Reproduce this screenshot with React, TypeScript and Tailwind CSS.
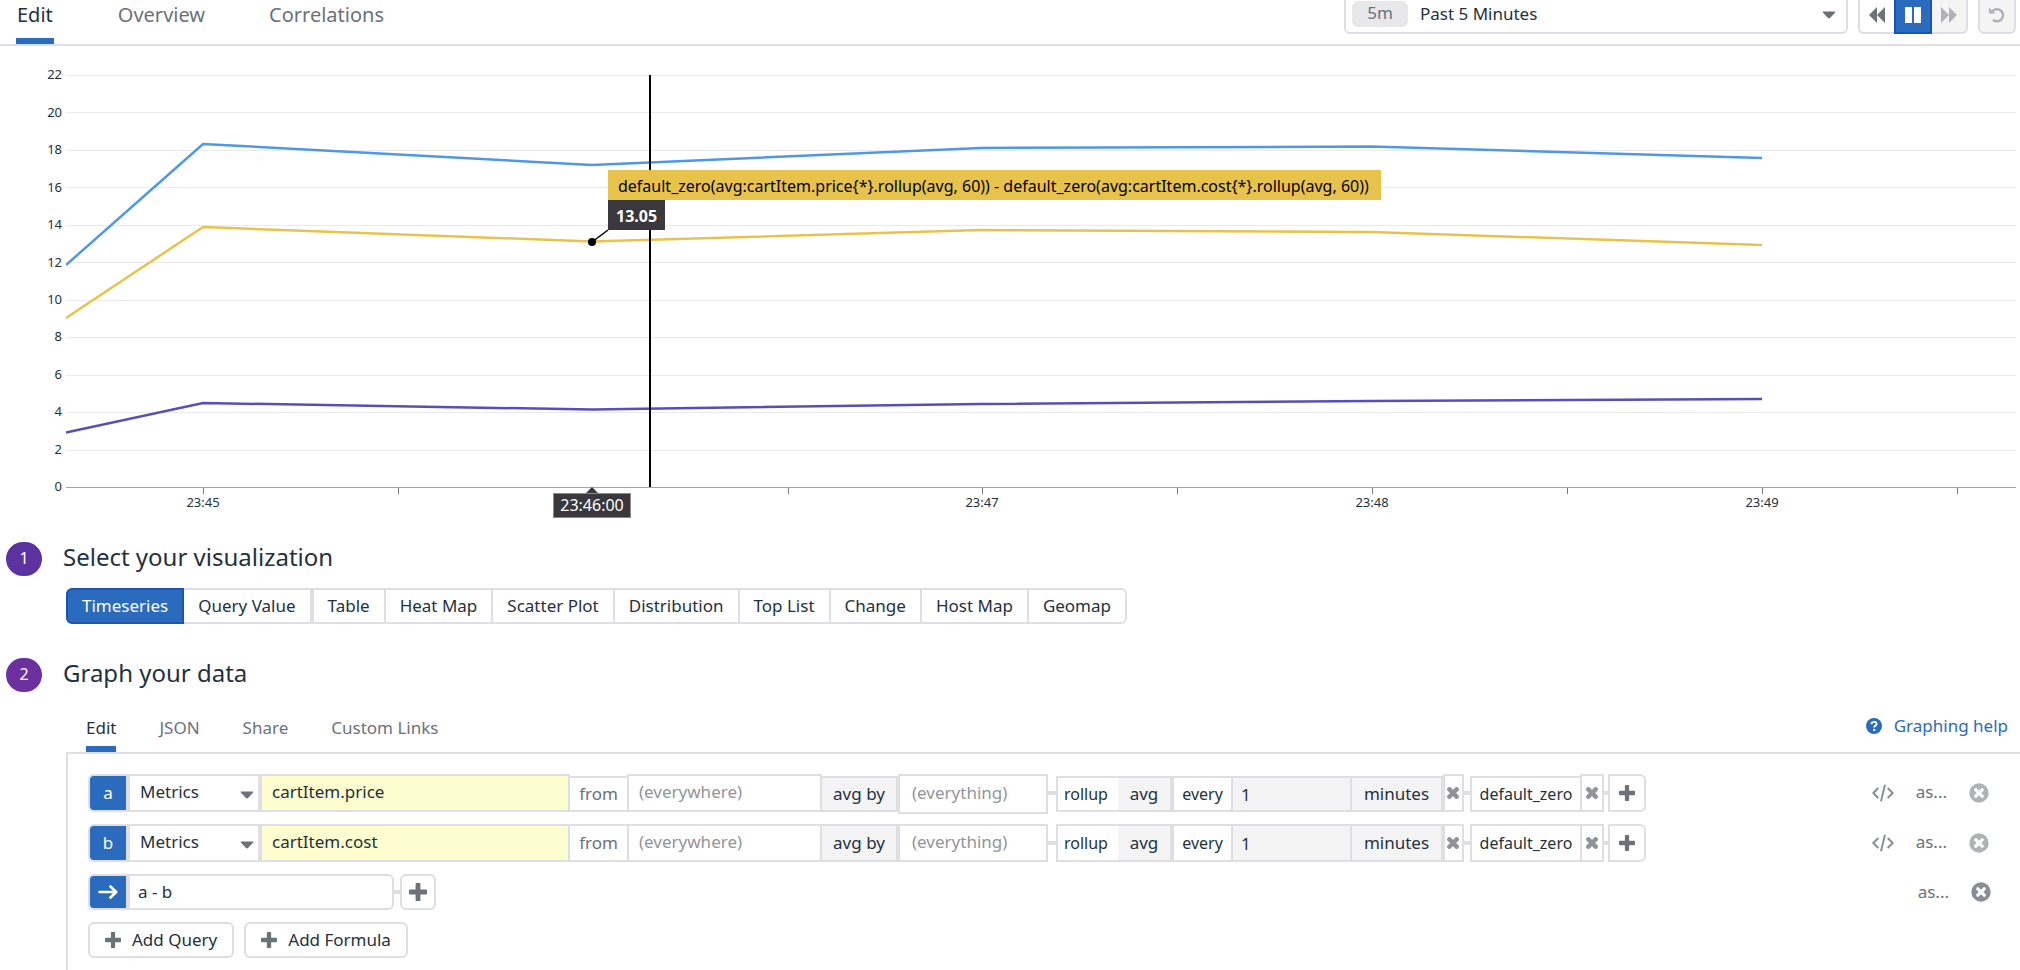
import type { ReactNode } from 'react';

const LINE = 'border-[#dedee4]';

/* ---------- icons ---------- */

function Caret() {
  return (
    <svg viewBox="0 0 14 8" className="pointer-events-none h-2 w-3.5" aria-hidden="true">
      <path d="M1.5 0.5h11c.8 0 1 .7.5 1.3L8 7c-.6.6-1.400.6-2 0L1 1.800C.5 1.200.7.5 1.500.5z" fill="#6b7379" />
    </svg>
  );
}

function Plus({ className }: { className: string }) {
  return (
    <svg viewBox="0 0 18 18" className={className} aria-hidden="true">
      <path
        d="M7.600 0h2.800c.6 0 1 .4 1 1v5.600H17c.6 0 1 .4 1 1v2.800c0 .6-.4 1-1 1h-5.600V17c0 .6-.4 1-1 1H7.600c-.6 0-1-.4-1-1v-5.600H1c-.6 0-1-.4-1-1V7.600c0-.6.4-1 1-1h5.600V1c0-.6.4-1 1-1z"
        fill="#6b7379"
      />
    </svg>
  );
}

function Cross() {
  return (
    <svg viewBox="0 0 12 12" className="h-3 w-3 shrink-0" aria-hidden="true">
      <path d="M2.400 2.400l7.200 7.200M9.600 2.400L2.400 9.600" stroke="#929399" strokeWidth="4.400" strokeLinecap="square" />
    </svg>
  );
}

function RemoveIcon({ dark }: { dark?: boolean }) {
  return (
    <svg viewBox="0 0 20 20" className="h-5 w-5" aria-hidden="true">
      <circle cx="10" cy="10" r="9.700" fill={dark ? '#888e93' : '#afb3b6'} />
      <path d="M6.800 6.800l6.400 6.400M13.200 6.800l-6.400 6.400" stroke="#fff" strokeWidth="3.300" strokeLinecap="round" />
    </svg>
  );
}

function CodeIcon() {
  return (
    <svg viewBox="0 0 22 18" className="h-[18px] w-[22px]" fill="none" stroke="#868c91" strokeWidth="1.900" aria-hidden="true">
      <path d="M6.300 4L1.300 9l5 5M15.700 4l5 5-5 5M13 .8L9 17.200" />
    </svg>
  );
}

/* ---------- top bar ---------- */

function TopBar() {
  const icon = 'flex w-9 items-center justify-center';
  return (
    <header className={`flex h-[46px] items-start justify-between border-b-2 pl-4 pr-1 ${LINE}`}>
      <nav className="flex h-11 gap-16 text-[20px] leading-[30px] text-[#69727a]">
        <a href="#edit" className="border-b-[6px] border-[#2a6bbd] px-px text-[#24313c]">
          Edit
        </a>
        <a href="#overview">Overview</a>
        <a href="#correlations">Correlations</a>
      </nav>
      <div className="-mt-2 flex h-[42px] gap-2.5 text-[17px]">
        <div className={`flex w-[504px] items-center rounded-md border-2 pl-1.5 pr-2.5 ${LINE}`}>
          <span className="mt-0.5 flex h-[26px] w-14 items-center justify-center rounded-md bg-[#e8e8ea] pb-0.5 text-[#69727a]">
            5m
          </span>
          <select
            aria-label="Time range"
            className="mt-0.5 h-7 flex-1 appearance-none bg-transparent pl-3 text-[#24313c] outline-none"
          >
            <option>Past 5 Minutes</option>
          </select>
          <span className="mt-1">
            <Caret />
          </span>
        </div>
        <div className="flex">
          <button aria-label="Step back" className={`${icon} rounded-l-md border-2 border-r-0 pt-1 ${LINE}`}>
            <svg viewBox="0 0 16 16" className="h-4 w-4" fill="#6b7379" aria-hidden="true">
              <path d="M8 0v16L0 8zM16 0v16L8 8z" />
            </svg>
          </button>
          <button aria-label="Pause" className="flex w-[38px] items-center justify-center border-2 border-[#1d52b8] bg-[#2a6bbd] pt-1">
            <svg viewBox="0 0 16 16" className="h-4 w-4" fill="#fff" aria-hidden="true">
              <path d="M0 0h7v16H0zM9 0h7v16H9z" />
            </svg>
          </button>
          <button aria-label="Step forward" className={`${icon} rounded-r-md border-2 border-l-0 bg-[#f4f4f5] pt-1 ${LINE}`}>
            <svg viewBox="0 0 16 16" className="h-4 w-4" fill="#b0b2b7" aria-hidden="true">
              <path d="M0 0v16l8-8zM8 0v16l8-8z" />
            </svg>
          </button>
        </div>
        <button aria-label="Reset" className={`flex w-[38px] items-center justify-center rounded-md border-2 bg-[#f4f4f5] pt-1 ${LINE}`}>
          <svg viewBox="0 0 16 16" className="h-4 w-4" fill="none" stroke="#b0b2b7" aria-hidden="true">
            <path d="M3.200 4.600A6 6 0 1 1 4 12.700" strokeWidth="2.600" />
            <path d="M0 .5l6.300 6H0z" fill="#b0b2b7" stroke="none" />
          </svg>
        </button>
      </div>
    </header>
  );
}

/* ---------- chart ---------- */

const PLOT_W = 1950;
const PLOT_H = 412;
const SERIES = [
  { color: '#4f98e6', points: '0,190 137,69 526,90 915,73 1305,71.500 1696,83' },
  { color: '#e8c34c', points: '0,243 137,152 526,166.500 915,155 1305,157 1696,170' },
  { color: '#574fb8', points: '0,357.500 137,328 526,334.500 915,329 1305,326 1696,324' },
];
const Y_TICKS = [22, 20, 18, 16, 14, 12, 10, 8, 6, 4, 2, 0];
const X_TICKS = [
  { x: 137, label: '23:45' },
  { x: 332 },
  { x: 722 },
  { x: 916, label: '23:47' },
  { x: 1111 },
  { x: 1306, label: '23:48' },
  { x: 1501 },
  { x: 1696, label: '23:49' },
  { x: 1891 },
];

function left(x: number) {
  return { left: `${(x / PLOT_W) * 100}%` };
}

function Chart() {
  return (
    <section aria-label="Timeseries chart" className="flex pr-1 pt-[29px]">
      <div className="flex h-[412px] w-[66px] flex-col justify-between pr-1 text-right text-[13px] text-[#24313c]">
        {Y_TICKS.map((t) => (
          <span key={t} className="flex h-0 items-center justify-end">
            {t}
          </span>
        ))}
      </div>
      <div className="relative h-[450px] flex-1">
        <div className="flex h-[413px] flex-col justify-between">
          {Y_TICKS.map((t) => (
            <div key={t} className={t === 0 ? 'h-px bg-[#a5a5a8]' : 'h-px bg-[#eaeaeb]'} />
          ))}
        </div>
        <svg
          viewBox={`0 0 ${PLOT_W} ${PLOT_H}`}
          preserveAspectRatio="none"
          className="absolute left-0 top-0 h-[412px] w-full"
          fill="none"
          aria-hidden="true"
        >
          {SERIES.map((s) => (
            <polyline key={s.color} points={s.points} stroke={s.color} strokeWidth="2.500" vectorEffect="non-scaling-stroke" />
          ))}
        </svg>
        {X_TICKS.map((t) => (
          <div key={t.x} className="absolute top-[413px] flex w-0 flex-col items-center" style={left(t.x)}>
            <span className="h-1.5 w-px bg-[#77777b]" />
            <span className="text-[13px] leading-4 text-[#24313c]">{t.label}</span>
          </div>
        ))}
        <div className="absolute top-[412px] flex w-0 flex-col items-center" style={left(526)}>
          <svg viewBox="0 0 14 7" className="h-1.5 w-3" aria-hidden="true">
            <path d="M7 0l7 7H0z" fill="#3a383d" />
          </svg>
          <span className="border border-[#8a8a8e] bg-[#3a383d] px-1.5 text-[16px] leading-[23px] text-white">23:46:00</span>
        </div>
        <div className="absolute top-0 h-[412px] w-0.5 bg-black" style={left(583)} />
        <div className="absolute top-[95px] flex flex-col items-start" style={left(542)}>
          <span className="h-[30px] whitespace-nowrap bg-[#e8c34c] pl-2.5 pr-3 text-[16px] leading-8 text-black">
            default_zero(avg:cartItem.price{'{*}'}.rollup(avg, 60)) - default_zero(avg:cartItem.cost{'{*}'}.rollup(avg, 60))
          </span>
          <span className="h-[30px] bg-[#3a383d] px-2 text-[16px] font-bold leading-8 text-white">13.05</span>
        </div>
        <svg viewBox="0 0 22 18" className="absolute top-[154px] h-[18px] w-[22px]" style={left(521)} aria-hidden="true">
          <path d="M5 13L21 1" stroke="#000" strokeWidth="1.500" />
          <circle cx="5" cy="13" r="4" fill="#000" />
        </svg>
      </div>
    </section>
  );
}

/* ---------- sections ---------- */

function SectionTitle({ n, color, children }: { n: number; color: string; children: ReactNode }) {
  return (
    <div className="flex items-start gap-[21px] pl-1.5">
      <span className={`flex h-[34px] w-9 items-center justify-center rounded-full pb-0.5 text-[16px] text-white ${color}`}>
        {n}
      </span>
      <h2 className="text-[24px] leading-[30px] text-[#24313c]">{children}</h2>
    </div>
  );
}

const VISUALS = ['Table', 'Heat Map', 'Scatter Plot', 'Distribution', 'Top List', 'Change', 'Host Map', 'Geomap'];

function VisualPicker() {
  return (
    <div className="mt-3 flex h-9 pl-[66px] text-[17px] text-[#24313c]">
      <button className="rounded-l-md border-2 border-[#1d52b8] bg-[#2a6bbd] px-3.5 text-white">Timeseries</button>
      <button className={`border-y-2 border-r-4 px-3.5 ${LINE}`}>Query Value</button>
      {VISUALS.map((v) => (
        <button key={v} className={`border-y-2 border-r-2 px-3.5 last:rounded-r-md ${LINE}`}>
          {v}
        </button>
      ))}
    </div>
  );
}

function Link() {
  return <span className="h-1 flex-1 bg-[#dedee4]" />;
}

function QueryRow({ letter, metric, inset }: { letter: string; metric: string; inset?: boolean }) {
  const cell = `flex h-[38px] items-center border-y-2 ${LINE}`;
  const part = inset ? `mt-0.5 flex h-9 items-center border-y-2 ${LINE}` : cell;
  const link = 'flex h-[38px] items-center';
  const input = `border-2 pb-1 outline-none placeholder:text-[#929599] ${LINE}`;
  return (
    <div className="flex h-[38px] items-start text-[17px] text-[#24313c]">
      <span className={`flex h-[38px] w-[38px] items-center justify-center rounded-l-md border-2 border-r-0 bg-[#2a6bbd] text-white ${LINE}`}>
        {letter}
      </span>
      <div className={`${cell} w-[134px] border-l-4 border-r-2 pr-1`}>
        <select
          aria-label={`Source of ${letter}`}
          className="h-full min-w-0 flex-1 appearance-none bg-transparent pb-0.5 pl-2.5 outline-none"
        >
          <option>Metrics</option>
        </select>
        <span className="mt-1">
          <Caret />
        </span>
      </div>
      <input
        aria-label={`Metric ${letter}`}
        defaultValue={metric}
        className={`${input} h-[38px] w-[310px] bg-[#fefdd0] pl-2.5`}
      />
      <span className={`${part} w-[57px] justify-center text-[#69727a]`}>from</span>
      <input aria-label={`Scope of ${letter}`} placeholder="(everywhere)" className={`${input} h-[38px] w-[195px] pl-2.5`} />
      <button className={`${part} w-[76px] justify-center border-r-2 bg-[#f4f4f5]`}>avg by</button>
      <input
        aria-label={`Group of ${letter}`}
        placeholder="(everything)"
        className={`${input} w-[150px] pl-3 ${inset ? 'h-10' : 'h-[38px]'}`}
      />
      <span className={`${link} w-2`}>
        <Link />
      </span>
      <span className={`${part} w-[62px] border-l-2 pl-1.5 text-[16px]`}>rollup</span>
      <button className={`${part} w-14 justify-center border-r-4 bg-[#f4f4f5]`}>avg</button>
      <span className={`${part} w-[57px] justify-center text-[16px]`}>every</span>
      <input
        aria-label={`Interval of ${letter}`}
        defaultValue="1"
        className={`w-[121px] border-2 bg-[#f4f4f5] pl-2 outline-none ${LINE} ${inset ? 'mt-0.5 h-9' : 'h-[38px]'}`}
      />
      <button className={`${part} w-[91px] justify-center border-r-2 bg-[#f4f4f5]`}>minutes</button>
      <button aria-label="Remove rollup" className={`${cell} w-[21px] justify-center border-x-2 pr-0.5`}>
        <Cross />
      </button>
      <span className={`${link} w-1.5`}>
        <Link />
      </span>
      <span className={`${part} w-[110px] justify-center border-l-2 text-[16px]`}>default_zero</span>
      <button aria-label="Remove default_zero" className={`${cell} w-6 justify-center border-x-2`}>
        <Cross />
      </button>
      <span className={`${link} w-1`}>
        <Link />
      </span>
      <button aria-label="Add function" className={`${cell} w-[38px] justify-center rounded-r-md border-x-2`}>
        <Plus className="h-4 w-4" />
      </button>
      <div className="ml-auto flex h-[38px] items-center gap-[22px] pr-[31px] text-[#69727a]">
        <button aria-label="Edit as code">
          <CodeIcon />
        </button>
        <button className="pb-0.5">as...</button>
        <button aria-label={`Remove ${letter}`}>
          <RemoveIcon />
        </button>
      </div>
    </div>
  );
}

function Editor() {
  return (
    <div className="pl-[66px]">
      <div className="flex justify-between pl-5 pr-3 text-[17px] text-[#69727a]">
        <nav className="flex h-[46px] gap-[43px] leading-[44px]">
          <a href="#query-edit" className="h-[46px] border-b-[6px] border-[#2a6bbd] text-[#24313c]">
            Edit
          </a>
          <a href="#query-json">JSON</a>
          <a href="#query-share">Share</a>
          <a href="#query-links">Custom Links</a>
        </nav>
        <a href="#help" className="flex h-10 items-center gap-3 text-[#2a6bbd]">
          <svg viewBox="0 0 16 16" className="h-4 w-4" aria-hidden="true">
            <circle cx="8" cy="8" r="8" fill="#2a6bbd" />
            <path d="M5.500 6.200C5.600 4.600 6.700 3.900 8.100 3.900s2.500.8 2.500 2.100c0 1.600-2.400 1.700-2.400 3.400" fill="none" stroke="#fff" strokeWidth="1.900" />
            <circle cx="8.200" cy="11.900" r="1.200" fill="#fff" />
          </svg>
          Graphing help
        </a>
      </div>
      <div className={`flex flex-col gap-3 border-l-2 border-t-2 pb-3 pl-5 pt-5 ${LINE}`}>
        <QueryRow letter="a" metric="cartItem.price" inset />
        <QueryRow letter="b" metric="cartItem.cost" />
        <div className="flex h-9 items-center text-[17px] text-[#24313c]">
          <span className={`flex h-9 w-[38px] items-center justify-center rounded-l-md border-2 border-r-0 bg-[#2a6bbd] ${LINE}`}>
            <svg viewBox="0 0 20 14" className="h-3.5 w-5" fill="none" stroke="#fff" strokeWidth="2.600" strokeLinecap="round" strokeLinejoin="round" aria-hidden="true">
              <path d="M1.500 7h16.500M12.500 1.500L18.200 7l-5.700 5.500" />
            </svg>
          </span>
          <input
            aria-label="Formula"
            defaultValue="a - b"
            className={`h-9 w-[268px] rounded-r-md border-2 border-l-4 bg-white pb-0.5 pl-2 outline-none ${LINE}`}
          />
          <span className="flex w-1.5">
            <Link />
          </span>
          <button aria-label="Add function" className={`flex h-9 w-9 items-center justify-center rounded-md border-2 ${LINE}`}>
            <Plus className="h-[18px] w-[18px]" />
          </button>
          <div className="ml-auto flex items-center gap-[22px] pr-[29px] text-[#69727a]">
            <button>as...</button>
            <button aria-label="Remove formula">
              <RemoveIcon dark />
            </button>
          </div>
        </div>
        <div className="flex gap-2.5 text-[17px] text-[#24313c]">
          {['Add Query', 'Add Formula'].map((label) => (
            <button key={label} className={`flex h-9 items-center gap-[11px] rounded-md border-2 px-[15px] ${LINE}`}>
              <Plus className="h-4 w-4" />
              {label}
            </button>
          ))}
        </div>
      </div>
    </div>
  );
}

export default function App() {
  return (
    <main className="overflow-hidden bg-white font-['Noto_Sans',sans-serif]">
      <TopBar />
      <Chart />
      <section className="mt-[17px]">
        <SectionTitle n={1} color="bg-[#5b329f]">
          Select your visualization
        </SectionTitle>
        <VisualPicker />
      </section>
      <section className="mt-[34px]">
        <SectionTitle n={2} color="bg-[#6c309f]">
          Graph your data
        </SectionTitle>
        <div className="mt-3.5">
          <Editor />
        </div>
      </section>
    </main>
  );
}
